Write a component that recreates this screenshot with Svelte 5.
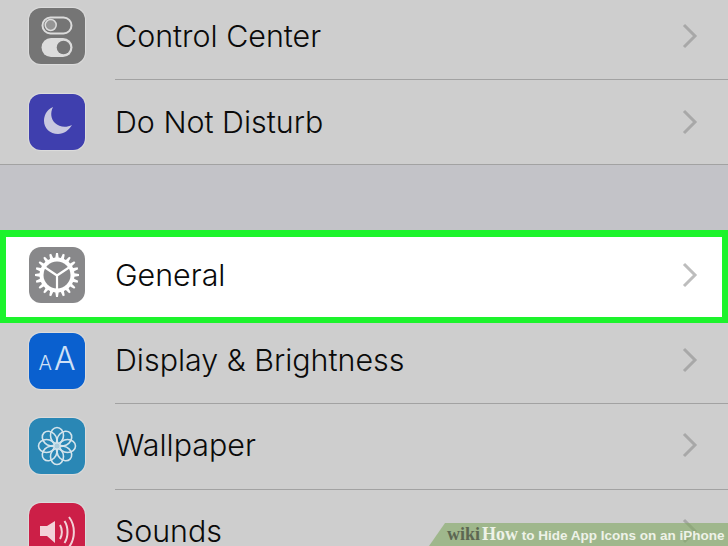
<script>
	const teeth = 20;

	// outer outline of the settings gear
	const gearPath = () => {
		let d = "";
		for (let i = 0; i < teeth; i++) {
			const a = (i / teeth) * Math.PI * 2;
			const w = Math.PI / teeth;
			const pts = [
				[17.5, a - w * 0.6],
				[22, a - w * 0.28],
				[22, a + w * 0.28],
				[17.5, a + w * 0.6]
			];
			for (const [r, t] of pts) {
				d += `${d ? "L" : "M"}${(28 + r * Math.cos(t)).toFixed(2)} ${(28 + r * Math.sin(t)).toFixed(2)}`;
			}
		}
		return d + "Z";
	};

	const petals = [0, 45, 90, 135, 180, 225, 270, 315];
</script>

<main>
	<section class="group first">
		<div class="row">
			<div class="icon control">
				<svg viewBox="0 0 56 56">
					<rect x="13.500" y="9.500" width="29" height="16" rx="8" fill="none" stroke="#dcdcdc" stroke-width="2" />
					<circle cx="21.700" cy="17" r="5.500" fill="#959595" stroke="#dcdcdc" stroke-width="1.500" />
					<rect x="12.500" y="30" width="31" height="19" rx="9.500" fill="#dcdcdc" />
					<circle cx="34.500" cy="39.500" r="6.800" fill="#757575" />
				</svg>
			</div>
			<div class="body">
				<span>Control Center</span>
				<svg class="chev" viewBox="0 0 16 26"><path d="M2 2l11 11L2 24" /></svg>
			</div>
		</div>
		<div class="row second">
			<div class="icon moon">
				<svg viewBox="0 0 56 56">
					<path d="M24 13C17 16 15 22 15 27C15 34 21 40 29 40C35 40 40 36 43 31C37 34 30 33 26 29C22 25 21 19 24 13Z" fill="#c8c8e0" />
				</svg>
			</div>
			<div class="body last">
				<span>Do Not Disturb</span>
				<svg class="chev" viewBox="0 0 16 26"><path d="M2 2l11 11L2 24" /></svg>
			</div>
		</div>
	</section>

	<div class="gap"></div>

	<section class="highlight">
		<div class="row">
			<div class="icon gear">
				<svg viewBox="0 0 56 56">
					<path d={gearPath()} fill="#fff" />
					<circle cx="28" cy="28" r="13.500" fill="#88888a" />
					<path d="M28 28.500L28 42M28 28.500L16 20.500M28 28.500L40 20.500" stroke="#fff" stroke-width="2.200" fill="none" />
				</svg>
			</div>
			<div class="body plain">
				<span>General</span>
				<svg class="chev" viewBox="0 0 16 26"><path d="M2 2l11 11L2 24" /></svg>
			</div>
		</div>
	</section>

	<section class="group">
		<div class="row tall">
			<div class="icon display">
				<span class="small">A</span><span class="big">A</span>
			</div>
			<div class="body">
				<span>Display &amp; Brightness</span>
				<svg class="chev" viewBox="0 0 16 26"><path d="M2 2l11 11L2 24" /></svg>
			</div>
		</div>
		<div class="row wide">
			<div class="icon wallpaper">
				<svg viewBox="0 0 56 56">
					{#each petals as p}
						<ellipse cx="28" cy="17.500" rx="6.500" ry="8" transform="rotate({p} 28 28)" fill="none" stroke="#d4e4ec" stroke-width="1.600" />
					{/each}
					<circle cx="28" cy="28" r="2.500" fill="#a9cbdc" />
				</svg>
			</div>
			<div class="body">
				<span>Wallpaper</span>
				<svg class="chev" viewBox="0 0 16 26"><path d="M2 2l11 11L2 24" /></svg>
			</div>
		</div>
		<div class="row">
			<div class="icon sounds">
				<svg viewBox="0 0 56 56">
					<path d="M11 23h7l8-5v22l-8-7h-7Z" fill="#f2d2d8" />
					<path d="M31 22c2.500 4 2.500 10 0 14M35.500 18c4 6 4 16 0 22M40 14c6.500 8.500 6.500 21.500 0 30" fill="none" stroke="#f2d2d8" stroke-width="2" />
				</svg>
			</div>
			<div class="body">
				<span>Sounds</span>
				<svg class="chev" viewBox="0 0 16 26"><path d="M2 2l11 11L2 24" /></svg>
			</div>
		</div>
	</section>

	<div class="caption"><b class="wiki">wiki</b><b class="how">How</b> to Hide App Icons on an iPhone</div>
</main>

<style>
	:global(body) {
		margin: 0;
	}

	main {
		position: relative;
		width: 728px;
		height: 546px;
		overflow: hidden;
		background-color: #cecece;
		font-family: Inter, "Liberation Sans", sans-serif;
		color: #0a0a0a;
	}

	.group.first {
		margin-top: -5px;
		border-bottom: 1px solid #a2a2a2;
	}

	.row {
		display: flex;
		align-items: center;
		height: 85px;
		padding-left: 29px;
		gap: 30px;
	}
	.row.second {
		height: 84px;
	}
	.row.tall {
		height: 87px;
	}
	.row.wide {
		height: 86px;
	}

	.body {
		flex: 1;
		align-self: stretch;
		display: flex;
		align-items: center;
		justify-content: space-between;
		padding-right: 30px;
		padding-bottom: 3px;
		font-size: 30.400px;
		font-weight: 350;
		border-bottom: 1px solid #a2a2a2;
	}
	.body.last,
	.tall .body {
		padding-bottom: 0;
	}
	.body.last,
	.body.plain {
		border-bottom: none;
	}

	.chev {
		width: 16px;
		height: 26px;
		fill: none;
		stroke: #a8a8a8;
		stroke-width: 3;
	}
	.plain .chev {
		stroke: #bdbdbd;
	}

	.icon {
		flex: none;
		width: 56px;
		height: 56px;
		margin-bottom: 3px;
		border-radius: 12px;
		overflow: hidden;
		box-sizing: border-box;
		box-shadow: 0 0 1px 1px rgba(255, 255, 255, 0.3);
	}
	.icon svg {
		display: block;
		width: 56px;
		height: 56px;
	}
	.control {
		background-color: #757575;
	}
	.moon {
		background-color: #3f3fae;
		margin-bottom: 0;
	}
	.gear {
		background-color: #88888a;
	}
	.display {
		background-color: #0a60cf;
		color: #cfe0f6;
		display: flex;
		align-items: baseline;
		justify-content: center;
		gap: 2px;
		margin-bottom: 0;
		padding-top: 6px;
		font-weight: 300;
	}
	.display .small {
		font-size: 20px;
	}
	.display .big {
		font-size: 32px;
	}
	.wallpaper {
		background-color: #2a87b5;
	}
	.sounds {
		background-color: #cc1f47;
	}

	.gap {
		height: 65px;
		background-color: #c3c3c8;
	}

	.highlight {
		position: relative;
		margin-bottom: -6px;
		background-color: #fff;
		border: 6px solid #1cf32c;
		border-top-width: 7px;
	}
	.highlight .row {
		height: 80px;
		padding-left: 23px;
		padding-bottom: 4px;
		box-sizing: border-box;
	}
	.highlight .icon {
		margin-bottom: 0;
	}
	.highlight .body {
		padding-right: 24px;
		padding-bottom: 0;
	}

	.caption {
		position: absolute;
		right: 0;
		bottom: 0;
		width: 299px;
		height: 23px;
		box-sizing: border-box;
		padding-left: 18px;
		clip-path: polygon(16px 0, 100% 0, 100% 100%, 0 100%);
		background-color: rgba(129, 169, 96, 0.6);
		color: #eef2e8;
		font-family: "Liberation Sans", sans-serif;
		font-size: 13.500px;
		font-weight: 700;
		line-height: 23px;
		white-space: nowrap;
	}
	.wiki,
	.how {
		font-family: "Liberation Serif", serif;
		font-size: 18px;
	}
	.how {
		margin-left: 2px;
	}
	.wiki {
		color: #5c6652;
	}
</style>
